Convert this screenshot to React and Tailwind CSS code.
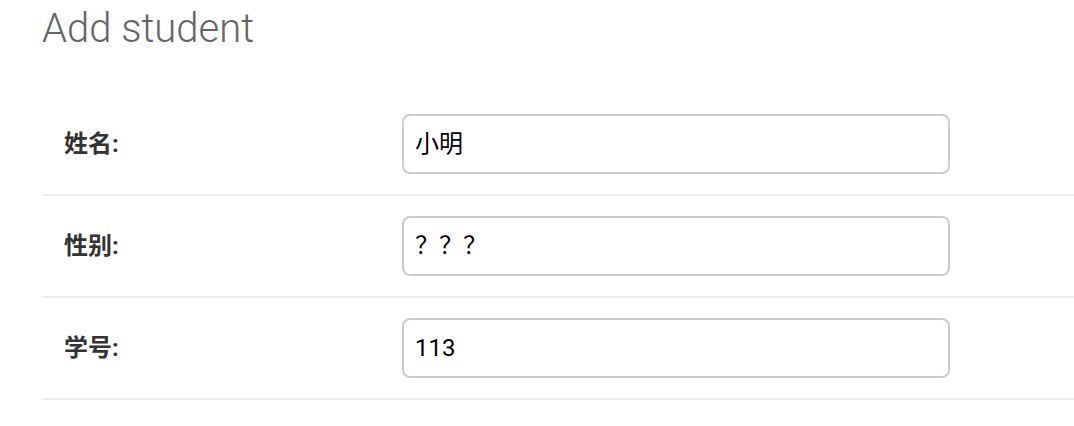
import React from "react";

const rows = [
  { label: "姓名:", value: "小明" },
  { label: "性别:", value: "？？？" },
  { label: "学号:", value: "113" },
];

export default function App() {
  return (
    <div className="min-h-screen bg-white pl-[42px] font-['Roboto','Noto_Sans_CJK_SC',sans-serif]">
      <h1 className="h-[94px] pt-[9px] text-[40px] font-light leading-[40px] text-[#666]">
        Add student
      </h1>
      <div>
        {rows.map((r) => (
          <div
            key={r.label}
            className="flex items-center border-b-2 border-[#eee] py-[20px] pl-[22px]"
          >
            <label className="w-[338px] text-[24px] font-bold text-[#333]">
              {r.label}
            </label>
            <div className="flex h-[60px] w-[548px] items-center rounded-lg border-2 border-[#ccc] px-[11px] text-[24px] text-black">
              {r.value}
            </div>
          </div>
        ))}
      </div>
    </div>
  );
}
